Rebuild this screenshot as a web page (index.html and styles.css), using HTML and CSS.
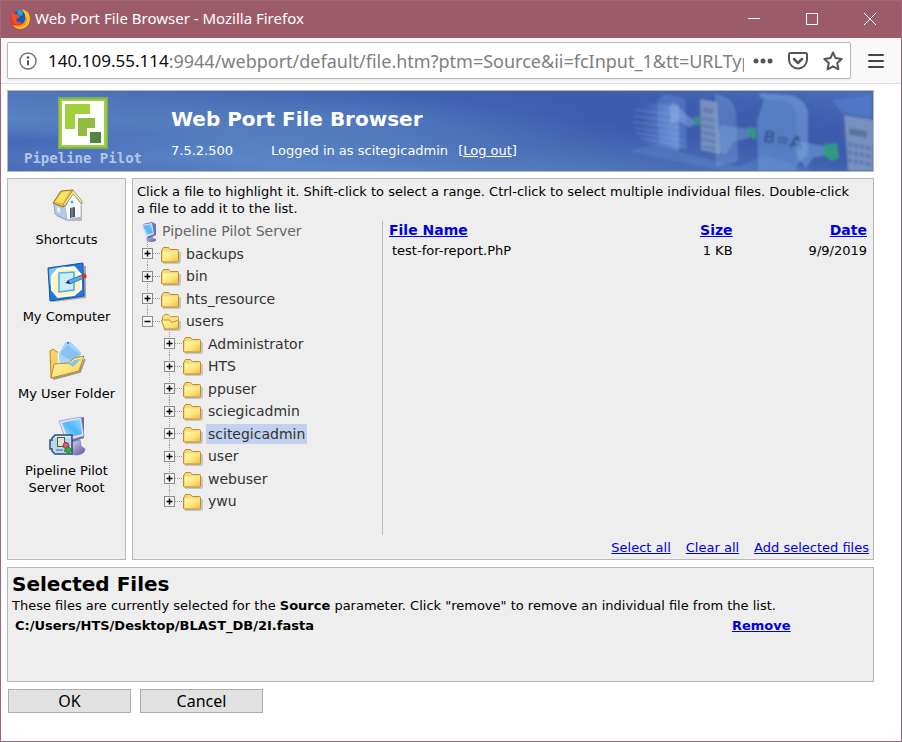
FILE: index.html
```html
<!DOCTYPE html>
<html lang="en">
<head>
    <meta charset="UTF-8">
    <meta name="viewport" content="width=device-width, initial-scale=1.0">
    <title>Web Port File Browser</title>
    <link rel="stylesheet" href="styles.css">
</head>
<body>
    <!-- shared icons -->
    <svg class="defs" width="0" height="0" aria-hidden="true">
        <defs>
            <linearGradient id="g-folder" x1="0" y1="0" x2="1" y2="1">
                <stop offset="0" stop-color="#fffbb0"/>
                <stop offset="0.6" stop-color="#fde274"/>
                <stop offset="1" stop-color="#f2bd4c"/>
            </linearGradient>
            <linearGradient id="g-screen" x1="0" y1="1" x2="1" y2="0">
                <stop offset="0" stop-color="#b9e6ff"/>
                <stop offset="0.5" stop-color="#4cb4f8"/>
                <stop offset="1" stop-color="#8fe0ff"/>
            </linearGradient>
            <linearGradient id="g-metal" x1="0" y1="0" x2="1" y2="1">
                <stop offset="0" stop-color="#dcdcf4"/>
                <stop offset="1" stop-color="#55559a"/>
            </linearGradient>
        </defs>
        <symbol id="plus-mid" viewBox="0 0 20 23">
            <path d="M6.5 0V23M12 11.5H20" stroke="#999" stroke-dasharray="1 1" fill="none"/>
            <rect x="1.5" y="6.5" width="10" height="10" fill="#f4f4f4" stroke="#8c8c8c"/>
            <path d="M3.5 11.5H9.5M6.5 8.5V14.5" stroke="#000" stroke-width="1.5"/>
        </symbol>
        <symbol id="plus-end" viewBox="0 0 20 23">
            <path d="M6.5 0V11M12 11.5H20" stroke="#999" stroke-dasharray="1 1" fill="none"/>
            <rect x="1.5" y="6.5" width="10" height="10" fill="#f4f4f4" stroke="#8c8c8c"/>
            <path d="M3.5 11.5H9.5M6.5 8.5V14.5" stroke="#000" stroke-width="1.5"/>
        </symbol>
        <symbol id="minus-end" viewBox="0 0 20 23">
            <path d="M6.5 0V11M12 11.5H20" stroke="#999" stroke-dasharray="1 1" fill="none"/>
            <rect x="1.5" y="6.5" width="10" height="10" fill="#f4f4f4" stroke="#8c8c8c"/>
            <path d="M3.5 11.5H9.5" stroke="#000" stroke-width="1.5"/>
        </symbol>
        <symbol id="folder" viewBox="0 0 20 18">
            <path d="M2 17h16q1 0 1-1V6" fill="none" stroke="#bbb" stroke-width="1.5"/>
            <path d="M.5 5L2.500 1.500h5l2 2h7q1 0 1 1V15q0 1-1 1H1.500q-1 0-1-1z" fill="#f6d878" stroke="#c08a28"/>
            <path d="M2 5.500h15v9.500H2z" fill="url(#g-folder)"/>
        </symbol>
        <symbol id="folder-open" viewBox="0 0 20 18">
            <path d="M3 17h15q1 0 1-1V8" fill="none" stroke="#bbb" stroke-width="1.5"/>
            <path d="M1.500 8V4l2-2.500h4l2 2h7q1 0 1 1V15H4z" fill="#f9df85" stroke="#c9962e"/>
            <path d="M.5 7h8l2 2.500 6-2h1V15q0 1-1 1h-13z" fill="url(#g-folder)" stroke="#c08a28"/>
        </symbol>
    </svg>

    <header class="titlebar">
        <svg class="firefox" viewBox="0 0 20 20" aria-hidden="true">
            <circle cx="10" cy="10.5" r="9.5" fill="#e8322b"/>
            <path d="M12 0q8 2 8 10a10 10 0 0 1-9 10q-6 0-8-4 7 2 11-2 3-7-2-14z" fill="#ffc324"/>
            <path d="M16 6q3 8-4 12-5 1-9-2 7 2 11-2 2-4 2-8z" fill="#ff8a1c"/>
            <path d="M4 4q6-5 10 0 3 5 0 9-4 3-8 0-3-4-2-9z" fill="#1659c4"/>
            <path d="M7 1q4-1 6 2l-1 4-4-1z" fill="#1aa7ea"/>
            <path d="M2 3q2 2 4 2l4 2-1 2q-3 0-3 2 1 3 6 2-3 4-7 2-4-3-3-12z" fill="#f3501f"/>
        </svg>
        <span class="window-title">Web Port File Browser - Mozilla Firefox</span>
        <button class="win-btn" aria-label="Minimize"><svg viewBox="0 0 14 14"><path d="M1 6.5H13"/></svg></button>
        <button class="win-btn" aria-label="Maximize"><svg viewBox="0 0 14 14"><path d="M1.5 1.5h11v11h-11z"/></svg></button>
        <button class="win-btn" aria-label="Close"><svg viewBox="0 0 14 14"><path d="M1 1L13 13M13 1L1 13"/></svg></button>
    </header>

    <div class="toolbar">
        <div class="urlbar">
            <svg class="info" viewBox="0 0 18 18" aria-hidden="true">
                <circle cx="9" cy="9" r="8" fill="none" stroke="#737373" stroke-width="1.5"/>
                <circle cx="9" cy="5.5" r="1.3" fill="#555"/>
                <rect x="8" y="8" width="2" height="5.500" rx="1" fill="#555"/>
            </svg>
            <label class="host" for="address">140.109.55.114</label>
            <input class="address" id="address" type="text" value=":9944/webport/default/file.htm?ptm=Source&amp;ii=fcInput_1&amp;tt=URLTyp">
            <button class="tool-btn" aria-label="Page actions">
                <svg viewBox="0 0 22 22"><circle cx="4" cy="11" r="2.500" fill="#555"/><circle cx="11" cy="11" r="2.500" fill="#555"/><circle cx="18" cy="11" r="2.500" fill="#555"/></svg>
            </button>
            <button class="tool-btn" aria-label="Save to Pocket">
                <svg viewBox="0 0 22 22" fill="none" stroke="#555" stroke-width="2" stroke-linecap="round" stroke-linejoin="round"><path d="M3.500 3h15q1.500 0 1.500 1.500v5a9 9 0 0 1-18 0v-5Q2 3 3.500 3z"/><path d="M7 9l4 4 4-4" stroke-width="2.5"/></svg>
            </button>
            <button class="tool-btn" aria-label="Bookmark">
                <svg viewBox="0 0 22 22" fill="none" stroke="#555" stroke-width="2" stroke-linejoin="round"><path d="M11 2.500l2.600 5.600 6.100.8-4.500 4.200 1.200 6.200-5.400-3-5.400 3 1.200-6.200-4.500-4.200 6.100-.8z"/></svg>
            </button>
        </div>
        <button class="menu-btn" aria-label="Menu">
            <svg viewBox="0 0 16 16"><path d="M1 2H15M1 8H15M1 14H15" stroke="#444" stroke-width="2" stroke-linecap="round"/></svg>
        </button>
    </div>

    <div class="page">
        <div class="banner">
            <svg class="banner-art" viewBox="0 0 300 80" preserveAspectRatio="xMaxYMid slice" aria-hidden="true">
                <defs>
                    <linearGradient id="g-sheet" x1="0" y1="0" x2="1" y2="0">
                        <stop offset="0" stop-color="#6f9be0" stop-opacity="0"/>
                        <stop offset="1" stop-color="#7ba6e4" stop-opacity="0.6"/>
                    </linearGradient>
                    <filter id="soft"><feGaussianBlur stdDeviation="1"/></filter>
                </defs>
                <g filter="url(#soft)">
                    <path d="M55 60l26-6 85 22 26-12 50 16H150z" fill="#6f97dc" opacity="0.25"/>
                    <path d="M84 10l8-7 20 4 2 52-28-7z" fill="#78a0e2" opacity="0.3"/>
                    <path d="M68 12l38 2v46l-38-8z" fill="url(#g-sheet)"/>
                    <path d="M63 19l46 6M61 25l48 6M60 31l49 6M62 37l47 6M64 42l45 7M68 47l41 8" stroke="#90b5ea" stroke-width="1.5" opacity="0.3"/>
                    <path d="M96 17l4-6 22 20-5 6-12-8-7 4z" fill="#96bcec" opacity="0.4"/>
                    <path d="M142 2l14 6q7 7 7 15l2 47-22 6z" fill="#7ea5df" opacity="0.35"/>
                    <path d="M127 8l17 3 3 52-19-4z" fill="#a7b7cb" opacity="0.55"/>
                    <path d="M130 16l10 2v5l-10-2z" fill="#54668c" opacity="0.5"/>
                    <path d="M128 27l14 3M128 34l14 3M129 41l14 3M129 48l14 3M129 55l14 3" stroke="#3f67ae" stroke-width="3" opacity="0.4"/>
                    <path d="M145 44l3-10 28 4v9l-15 4-9 13-6-4z" fill="#7facd7" opacity="0.4"/>
                    <path d="M118 28l5-3 6 3v6l-7 1z" fill="#419e86" opacity="0.6"/>
                    <path d="M174 36l9 1v11l-7-2z" fill="#2f9e7f" opacity="0.9"/>
                    <path d="M187 2l30 2q15 4 18 17v42l-12 12V25q-2-13-15-16l-21-2z" fill="#80a9e6" opacity="0.5"/>
                    <path d="M184 30l8-25 17 4q13 5 14 17v54h-38z" fill="#6c9ddc" opacity="0.5"/>
                    <text class="art-text" x="189" y="51" transform="rotate(10 189 51)">B=A</text>
                    <path d="M224 50l26 5 12 7-22 5-7 10-9-12z" fill="#77a9d8" opacity="0.5"/>
                    <path d="M251 53l13-1 2 15-7 3-9-6z" fill="#2f9e7f" opacity="0.9"/>
                    <path d="M259 9l40-5v23l-30-5z" fill="#5a85d3" opacity="0.5"/>
                    <path d="M271 24l30 5v51h-26z" fill="#9db1ca" opacity="0.6"/>
                    <path d="M276 37l18 3v7l-18-3z" fill="#53688f" opacity="0.7"/>
                    <path d="M275 53l25 5M275 61l25 5M275 69l25 5" stroke="#4669a8" stroke-width="4" stroke-dasharray="4 2" opacity="0.6"/>
                </g>
            </svg>
            <div class="brand">
                <svg class="brand-logo" viewBox="0 0 50 52" aria-hidden="true">
                    <rect width="50" height="52" fill="#7dae58"/>
                    <rect x="1.5" y="2" width="47" height="48" fill="#a2cf3c"/>
                    <rect x="4" y="4" width="42" height="44" fill="#fff"/>
                    <path d="M7 7h25v10H17v15H7z" fill="#a2cf3c"/>
                    <path d="M20 21h17v10h-8v8h-9z" fill="#90bd40"/>
                    <rect x="32" y="35" width="11" height="11" fill="#538440"/>
                </svg>
                <span class="brand-name">Pipeline Pilot</span>
            </div>
            <div class="banner-text">
                <h1>Web Port File Browser</h1>
                <p class="session">
                    <span>7.5.2.500</span>
                    <span>Logged in as scitegicadmin</span>
                    <span class="logout">[<a href="#">Log out</a>]</span>
                </p>
            </div>
        </div>

        <div class="columns">
            <nav class="panel places">
                <a class="place" href="#">
                    <svg class="place-icon" viewBox="0 0 46 46" aria-hidden="true">
                        <path d="M12 31l12 5h14V20z" fill="#b9b9b9"/>
                        <path d="M10 19l6-8 8 8-2 16-11-6z" fill="#b4cae9" stroke="#7a8fb5" stroke-width="0.7"/>
                        <path d="M29 8l8 11v13l-14 3-2-14z" fill="#f4f8ff" stroke="#9cacc9" stroke-width="0.7"/>
                        <path d="M9 18L17 6l12-1-7 15-3 2z" fill="#efbd2c" stroke="#9a7418"/>
                        <path d="M11 17l7-10 8-1-7 12z" fill="#fbe06a"/>
                        <path d="M29 5l9 11v3l-9-10-8 12-2-1z" fill="#f5e3ac" stroke="#9a8040" stroke-width="0.7"/>
                        <path d="M26 23l5-1v10l-5 1z" fill="#50586c"/>
                        <path d="M28 23v9" stroke="#8893ab"/>
                        <circle cx="28" cy="17" r="1.5" fill="#4cb4f0"/>
                        <path d="M13 22l3 1v5l-3-2z" fill="#e5f1ff"/>
                    </svg>
                    Shortcuts
                </a>
                <a class="place" href="#">
                    <svg class="place-icon" viewBox="0 0 46 46" aria-hidden="true">
                        <path d="M8 39l33-4V4" stroke="#777" stroke-width="2" fill="none" opacity="0.6"/>
                        <path d="M4 6l35-5 1 33-34 5z" fill="#2478dc" stroke="#1552a8"/>
                        <path d="M5 7l17-3-16 20z" fill="#7cc4fa"/>
                        <path d="M14 7l16-2 7 8v14l-7 6-16 2-6-7V14z" fill="#fff6bb" stroke="#fff" stroke-width="2"/>
                        <path d="M15 11l15-1v18l-15 2z" fill="#c9edff" stroke="#4cadea" stroke-width="1.5"/>
                        <path d="M23 19l15-6 2 3-14 6z" fill="#55aee9" stroke="#22659e" stroke-width="0.8"/>
                        <path d="M21 21l4-2 1 3z" fill="#222"/>
                        <circle cx="40" cy="14" r="2.5" fill="#c13a2b"/>
                    </svg>
                    My Computer
                </a>
                <a class="place" href="#">
                    <svg class="place-icon" viewBox="0 0 46 46" aria-hidden="true">
                        <path d="M9 40l27-7 5-13" stroke="#999" stroke-width="2" fill="none"/>
                        <path d="M6 12l3-2 4 3 25 5-2 13-29 8z" fill="#f8cf62" stroke="#bd8b2c"/>
                        <path d="M14 15L21 2h6l12 12-9 14-15-3z" fill="#a9d4fa" stroke="#e9f6ff" stroke-width="1.5"/>
                        <path d="M16 15l7-9 13 9-6 8z" fill="#75b5f2" opacity="0.6"/>
                        <circle cx="24" cy="4" r="1.2" fill="#4e8ac7"/>
                        <path d="M7 39l3-14 15-1 5-5 10-2-5 15z" fill="url(#g-folder)" stroke="#b88a30"/>
                        <path d="M22 23l7 5 8-8-7 1-3 3z" fill="#83c4ef"/>
                    </svg>
                    My User Folder
                </a>
                <a class="place" href="#">
                    <svg class="place-icon" viewBox="0 0 46 46" aria-hidden="true">
                        <path d="M26 26l10-2 1 6 4 3q0 5-8 6-9 0-8-5l3-3z" fill="url(#g-metal)" stroke="#7777ad" stroke-width="0.7"/>
                        <path d="M16 6l4-2 20-3v21l-15 5z" fill="#6b6bab"/>
                        <path d="M15 5l22-4 3 19-18 5z" fill="#e2e2f6" stroke="#9393bb" stroke-width="0.7"/>
                        <path d="M18 7l18-4 2 15-14 4z" fill="url(#g-screen)"/>
                        <path d="M11 19h17v19H11l-3-3v-2H6v-9h2v-2z" fill="#b9d7f3" stroke="#29536f" stroke-width="1.5"/>
                        <path d="M12 21h14" stroke="#fff"/>
                        <rect x="13.5" y="21.5" width="7" height="9" fill="#e6e3cd" stroke="#5b5b50"/>
                        <path d="M12 34h7M20 25l4 3" stroke="#48677f"/>
                        <circle cx="22" cy="29.5" r="3" fill="#e0587a" stroke="#703040" stroke-width="0.7"/>
                        <path d="M24 30l4 4-3 3-5-2z" fill="#28b52c" stroke="#16601c" stroke-width="0.7"/>
                    </svg>
                    Pipeline Pilot Server Root
                </a>
            </nav>

            <main class="panel browser">
                <p class="hint">Click a file to highlight it. Shift-click to select a range. Ctrl-click to select multiple individual files. Double-click a file to add it to the list.</p>
                <div class="split">
                    <div class="tree">
                        <div class="root">
                            <svg class="root-icon" viewBox="0 0 18 22" aria-hidden="true">
                                <path d="M6 15l6-1v3l3 1q1 3-5 3-5 0-5-3z" fill="url(#g-metal)"/>
                                <path d="M2 3l9-2 4 2v11l-8 4z" fill="#6f70b4"/>
                                <path d="M0 4l11-2 2 11-8 3z" fill="#dfe4f8"/>
                                <path d="M2 5l8-2 2 9-6 2z" fill="url(#g-screen)"/>
                            </svg>
                            <span>Pipeline Pilot Server</span>
                        </div>
                        <ul>
                            <li><div class="row"><svg class="toggle"><use href="#plus-mid"/></svg><svg class="folder"><use href="#folder"/></svg><span>backups</span></div></li>
                            <li><div class="row"><svg class="toggle"><use href="#plus-mid"/></svg><svg class="folder"><use href="#folder"/></svg><span>bin</span></div></li>
                            <li><div class="row"><svg class="toggle"><use href="#plus-mid"/></svg><svg class="folder"><use href="#folder"/></svg><span>hts_resource</span></div></li>
                            <li><div class="row"><svg class="toggle"><use href="#minus-end"/></svg><svg class="folder"><use href="#folder-open"/></svg><span>users</span></div>
                                <ul>
                                    <li><div class="row"><svg class="toggle"><use href="#plus-mid"/></svg><svg class="folder"><use href="#folder"/></svg><span>Administrator</span></div></li>
                                    <li><div class="row"><svg class="toggle"><use href="#plus-mid"/></svg><svg class="folder"><use href="#folder"/></svg><span>HTS</span></div></li>
                                    <li><div class="row"><svg class="toggle"><use href="#plus-mid"/></svg><svg class="folder"><use href="#folder"/></svg><span>ppuser</span></div></li>
                                    <li><div class="row"><svg class="toggle"><use href="#plus-mid"/></svg><svg class="folder"><use href="#folder"/></svg><span>sciegicadmin</span></div></li>
                                    <li><div class="row"><svg class="toggle"><use href="#plus-mid"/></svg><svg class="folder"><use href="#folder"/></svg><span class="current">scitegicadmin</span></div></li>
                                    <li><div class="row"><svg class="toggle"><use href="#plus-mid"/></svg><svg class="folder"><use href="#folder"/></svg><span>user</span></div></li>
                                    <li><div class="row"><svg class="toggle"><use href="#plus-mid"/></svg><svg class="folder"><use href="#folder"/></svg><span>webuser</span></div></li>
                                    <li><div class="row"><svg class="toggle"><use href="#plus-end"/></svg><svg class="folder"><use href="#folder"/></svg><span>ywu</span></div></li>
                                </ul>
                            </li>
                        </ul>
                    </div>
                    <div class="files">
                        <table class="file-table">
                            <thead>
                                <tr><th><a href="#">File Name</a></th><th class="num"><a href="#">Size</a></th><th class="num"><a href="#">Date</a></th></tr>
                            </thead>
                            <tbody>
                                <tr><td>test-for-report.PhP</td><td class="num">1 KB</td><td class="num">9/9/2019</td></tr>
                            </tbody>
                        </table>
                    </div>
                </div>
                <div class="actions">
                    <a href="#">Select all</a>
                    <a href="#">Clear all</a>
                    <a href="#">Add selected files</a>
                </div>
            </main>
        </div>

        <section class="panel selected">
            <h2>Selected Files</h2>
            <p>These files are currently selected for the <b>Source</b> parameter. Click "remove" to remove an individual file from the list.</p>
            <table class="selected-table">
                <tr><td>C:/Users/HTS/Desktop/BLAST_DB/2I.fasta</td><td class="remove"><a href="#">Remove</a></td></tr>
            </table>
        </section>

        <div class="buttons">
            <button class="btn">OK</button>
            <button class="btn">Cancel</button>
        </div>
    </div>
</body>
</html>
```
FILE: styles.css
```css
* {
    box-sizing: border-box;
}
body {
    margin: 0;
    min-height: 100vh;
    border: 1px solid #a0667a;
    background: #fff;
    color: #000;
    font-family: Verdana, "DejaVu Sans", sans-serif;
    font-size: 13px;
    line-height: 17px;
}
h1, h2, p, ul {
    margin: 0;
    padding: 0;
}
button {
    padding: 0;
    border: none;
    background: none;
    font: inherit;
}
a {
    color: #0000e0;
}
svg {
    display: block;
    flex: none;
}
.defs {
    position: absolute;
}

/* browser window */
.titlebar {
    display: flex;
    align-items: center;
    height: 37px;
    padding: 0 2px 2px 9px;
    background: #9b5b69;
    color: #fff;
    font-family: "Segoe UI", "Noto Sans", sans-serif;
    font-size: 15px;
}
.firefox {
    width: 20px;
    height: 20px;
}
.window-title {
    flex: 1;
    margin-left: 5px;
}
.win-btn {
    display: flex;
    align-items: center;
    justify-content: center;
    width: 58px;
    height: 35px;
}
.win-btn svg {
    width: 14px;
    height: 14px;
    fill: none;
    stroke: #fff;
}
.toolbar {
    display: flex;
    align-items: center;
    height: 46px;
    padding-left: 6px;
    border-bottom: 1px solid #e0e0e1;
    background: #f9f9fa;
}
.urlbar {
    display: flex;
    flex: 1;
    align-items: center;
    min-width: 0;
    height: 37px;
    padding: 0 6px 0 11px;
    border: 1px solid #b8b8ba;
    border-radius: 2px;
    background: #fff;
    box-shadow: 0 1px 3px rgba(0, 0, 0, 0.08);
    font-family: "Segoe UI", "Noto Sans", sans-serif;
    font-size: 17px;
}
.info {
    width: 18px;
    height: 18px;
}
.host {
    margin-left: 11px;
    color: #0c0c0d;
}
.address {
    flex: 1;
    min-width: 0;
    height: 30px;
    padding: 0;
    border: none;
    outline: none;
    background: none;
    color: #808080;
    font-family: inherit;
    font-size: 18px;
}
.tool-btn {
    margin-left: 13px;
}
.address + .tool-btn {
    margin-left: 8px;
}
.tool-btn svg {
    width: 22px;
    height: 22px;
}
.menu-btn {
    display: flex;
    justify-content: center;
    width: 50px;
}
.menu-btn svg {
    width: 16px;
    height: 16px;
}

/* page */
.page {
    padding: 6px 27px 0 6px;
}
.panel {
    border: 1px solid #b8b8b8;
    background: #eee;
}
.banner {
    position: relative;
    display: flex;
    height: 82px;
    border: 1px solid #b8b8b8;
    background:
        radial-gradient(ellipse 220px 22px at 20px 50px, rgba(65, 95, 180, 0.7), transparent),
        radial-gradient(ellipse 260px 40px at 340px 30px, rgba(90, 140, 205, 0.4), transparent),
        linear-gradient(8deg, #4a6bb8 0%, #5a86c6 22%, #4f75ba 42%, #3c5bac 66%, #3e5dae 80%, #4a6fb9 100%);
    color: #fff;
}
.banner-art {
    position: absolute;
    top: 0;
    right: 0;
    width: 300px;
    height: 80px;
}
.art-text {
    fill: #2c4a80;
    font-size: 17px;
    font-weight: bold;
    opacity: 0.7;
}
.brand {
    display: flex;
    flex-direction: column;
    align-items: center;
    width: 150px;
    padding-top: 6px;
}
.brand-logo {
    width: 50px;
    height: 52px;
}
.brand-name {
    color: #b4c6e6;
    font-family: "DejaVu Sans Mono", monospace;
    font-size: 14px;
    font-weight: bold;
    line-height: 18px;
}
.banner-text {
    padding: 16px 0 0 13px;
}
h1 {
    font-size: 20px;
    line-height: 24px;
}
.session {
    display: flex;
    margin-top: 11px;
}
.session span + span {
    margin-left: 38px;
}
.session .logout {
    margin-left: 10px;
}
.logout a {
    color: #fff;
}
.columns {
    display: flex;
    gap: 6px;
    margin-top: 6px;
}
.places {
    display: flex;
    flex: none;
    flex-direction: column;
    gap: 14px;
    width: 119px;
    padding: 6px 4px;
}
.place {
    display: flex;
    flex-direction: column;
    align-items: center;
    color: #000;
    text-align: center;
    text-decoration: none;
}
.place-icon {
    width: 46px;
    height: 46px;
}
.browser {
    flex: 1;
    min-width: 0;
    padding: 4px 4px 0;
}
.hint {
    padding-right: 12px;
}
.split {
    display: flex;
    min-height: 314px;
    margin-top: 4px;
}
.tree {
    width: 245px;
    color: #333;
    font-size: 14px;
}
.tree ul {
    padding-left: 4px;
    list-style: none;
}
.tree ul ul {
    padding-left: 22px;
}
.root {
    display: flex;
    align-items: center;
    gap: 3px;
    height: 21px;
    padding-left: 4px;
    color: #666;
}
.root-icon {
    width: 18px;
    height: 22px;
}
.row {
    display: flex;
    align-items: center;
    height: 23px;
}
.tree li:nth-child(even) > .row {
    height: 22px;
}
.toggle {
    width: 20px;
    height: 23px;
}
.folder {
    width: 20px;
    height: 18px;
    margin-top: 2px;
}
.row span {
    margin-left: 3px;
    padding: 0 2px;
    line-height: 20px;
}
.row .current {
    background: #c1d2ee;
}
.files {
    flex: 1;
    padding-left: 6px;
    border-left: 1px solid #b8b8b8;
}
.file-table {
    width: 100%;
    border-collapse: collapse;
}
.file-table th {
    padding: 0;
    font-size: 14px;
    line-height: 18px;
    text-align: left;
}
.file-table th:first-child {
    width: 44%;
}
.file-table td {
    padding: 3px 0 0 3px;
}
.file-table .num {
    width: 28%;
    padding-right: 2px;
    text-align: right;
}
.actions {
    display: flex;
    justify-content: flex-end;
    gap: 15px;
    margin-top: 4px;
    padding-bottom: 3px;
}
.selected {
    min-height: 115px;
    margin-top: 7px;
    padding: 4px;
}
h2 {
    font-size: 20px;
    line-height: 25px;
}
.selected-table {
    width: 100%;
    border-collapse: collapse;
    font-weight: bold;
}
.selected-table td {
    padding: 3px;
}
.selected-table .remove {
    width: 140px;
}
.buttons {
    display: flex;
    gap: 9px;
    padding: 7px 0 0 1px;
}
.btn {
    width: 123px;
    height: 24px;
    border: 1px solid #adadad;
    background: #e1e1e1;
    color: #000;
    font-family: Tahoma, "Noto Sans", sans-serif;
    font-size: 16px;
}
```
